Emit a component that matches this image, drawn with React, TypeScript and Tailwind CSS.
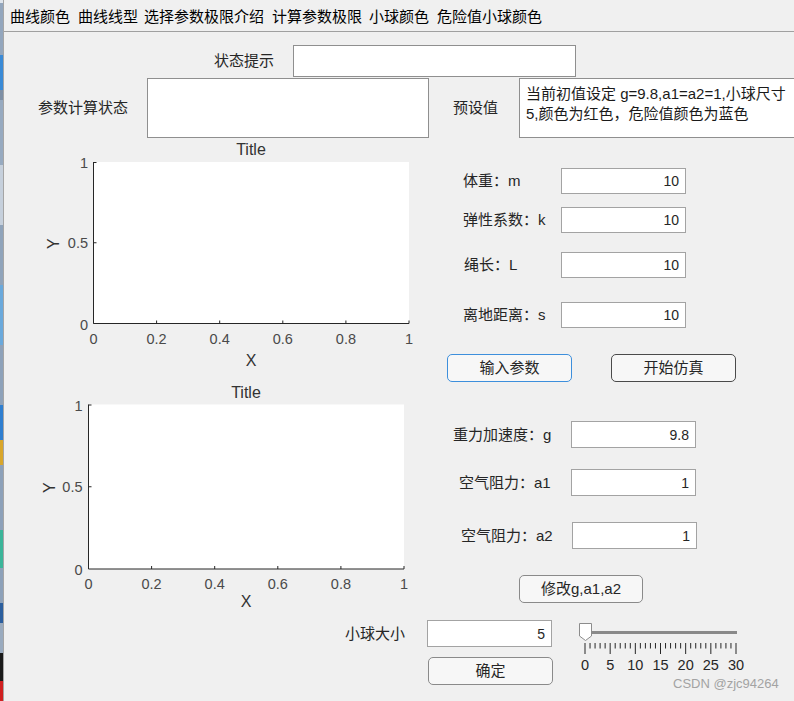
import React from "react";

const FONT = "font-['Liberation_Sans','Noto_Sans_CJK_SC',sans-serif]";

const STRIP = [
  "h-[3px] bg-[#dfe5ec]",
  "h-[52px] bg-[#93a6bd]",
  "h-[35px] bg-[#3a8ad6]",
  "h-[10px] bg-[#7d8fa5]",
  "h-[65px] bg-[#97aac0]",
  "h-[60px] bg-[#c6d0dc]",
  "h-[60px] bg-[#90a4bb]",
  "h-[60px] bg-[#6aa9dc]",
  "h-[60px] bg-[#8ea2ba]",
  "h-[35px] bg-[#2f7fd0]",
  "h-[25px] bg-[#d9a62a]",
  "h-[65px] bg-[#8da1b9]",
  "h-[38px] bg-[#3bb59a]",
  "h-[35px] bg-[#8da1b9]",
  "h-[20px] bg-[#2c5f9e]",
  "h-[30px] bg-[#9aabbf]",
  "h-[28px] bg-[#1a1a1a]",
  "h-[20px] bg-[#d02020]",
];

function Field({
  label,
  value,
  labelCls,
  boxCls,
}: {
  label: string;
  value: string;
  labelCls: string;
  boxCls: string;
}) {
  return (
    <div className="flex items-center">
      <span className={`${labelCls} shrink-0 whitespace-nowrap text-[15px] leading-[20px] text-[#262626]`}>
        {label}
      </span>
      <div
        className={`${boxCls} shrink-0 flex items-center justify-end border border-[#a3a3a3] bg-white pr-[6px] text-[14px] leading-[16px] text-[#262626]`}
      >
        {value}
      </div>
    </div>
  );
}

function Btn({ text, cls }: { text: string; cls: string }) {
  return (
    <div
      className={`${cls} shrink-0 flex items-center justify-center rounded-[5px] border bg-[#f7f7f7] text-[15px] leading-[20px] text-[#262626]`}
    >
      {text}
    </div>
  );
}

type ChartProps = {
  vb: string;
  w: number;
  h: number;
  L: number;
  R: number;
  T: number;
  B: number;
  yLabEnd: number;
  xLabY: number;
  xTitY: number;
  titleY: number;
  yTitX: number;
  cx: number;
};

function Chart(p: ChartProps) {
  const xs = [0, 1, 2, 3, 4, 5].map((i) => p.L + (i * (p.R - p.L)) / 5);
  const xl = ["0", "0.2", "0.4", "0.6", "0.8", "1"];
  const mid = (p.T + p.B) / 2;
  const font = "Liberation Sans, Arial, sans-serif";
  return (
    <svg width={p.w} height={p.h} viewBox={p.vb} className="block shrink-0">
      <rect x={p.L} y={p.T} width={p.R - p.L} height={p.B - p.T} fill="#ffffff" />
      <line x1={p.L} y1={p.T} x2={p.L} y2={p.B} stroke="#262626" strokeWidth={1} />
      <line x1={p.L} y1={p.B} x2={p.R} y2={p.B} stroke="#262626" strokeWidth={1.2} />
      {[p.T + 0.5, mid].map((y, i) => (
        <line key={i} x1={p.L} y1={y} x2={p.L + 3} y2={y} stroke="#262626" strokeWidth={1} />
      ))}
      {xs.map((x, i) => (
        <line key={i} x1={x} y1={p.B} x2={x} y2={p.B - 3} stroke="#262626" strokeWidth={1} />
      ))}
      <g fontFamily={font} fontSize={14.5} fill="#4a4a4a">
        <text x={p.yLabEnd} y={p.T + 1} textAnchor="end" dominantBaseline="central">1</text>
        <text x={p.yLabEnd} y={mid + 0.5} textAnchor="end" dominantBaseline="central">0.5</text>
        <text x={p.yLabEnd} y={p.B + 1} textAnchor="end" dominantBaseline="central">0</text>
        {xs.map((x, i) => (
          <text key={i} x={x} y={p.xLabY} textAnchor="middle" dominantBaseline="central">
            {xl[i]}
          </text>
        ))}
      </g>
      <g fontFamily={font} fontSize={16} fill="#333333">
        <text x={p.cx} y={p.titleY} textAnchor="middle" dominantBaseline="central">Title</text>
        <text x={p.cx} y={p.xTitY} textAnchor="middle" dominantBaseline="central">X</text>
        <text
          x={p.yTitX}
          y={mid + 1}
          textAnchor="middle"
          dominantBaseline="central"
          transform={`rotate(-90 ${p.yTitX} ${mid + 1})`}
        >
          Y
        </text>
      </g>
    </svg>
  );
}

function Slider() {
  const ticks = Array.from({ length: 31 }, (_, i) => i);
  const x0 = 584;
  const step = 151 / 30;
  return (
    <svg width={172} height={56} viewBox="576 620 172 56" className="block shrink-0">
      <rect x={589} y={631} width={147} height={3} fill="#8a8a8a" />
      <polygon
        points="578.5,623.5 590.5,623.5 590.5,636 584.5,640.5 578.5,636"
        fill="#ffffff"
        stroke="#8c8c8c"
        strokeWidth={1}
      />
      {ticks.map((i) => {
        const x = x0 + i * step;
        const major = i % 5 === 0;
        return (
          <line
            key={i}
            x1={x}
            y1={643}
            x2={x}
            y2={major ? 654 : 648.5}
            stroke="#262626"
            strokeWidth={1}
          />
        );
      })}
      <g fontFamily="Liberation Sans, Arial, sans-serif" fontSize={14.5} fill="#262626">
        {[0, 5, 10, 15, 20, 25, 30].map((v) => (
          <text key={v} x={x0 + v * step} y={664.5} textAnchor="middle" dominantBaseline="central">
            {v}
          </text>
        ))}
      </g>
    </svg>
  );
}

export default function App() {
  return (
    <div className={`${FONT} relative flex h-[701px] w-[794px] overflow-hidden bg-[#f0f0f0]`}>
      <div className="flex w-[3px] shrink-0 flex-col">
        {STRIP.map((c, i) => (
          <div key={i} className={`${c} shrink-0`} />
        ))}
      </div>
      <div className="flex w-[791px] shrink-0 flex-col overflow-hidden border-l border-[#a5a5a5]">
        {/* menu bar */}
        <div className="flex h-[32px] shrink-0 items-center border-b border-[#a0a0a0] bg-[#f0f0f0] pt-[2px] text-[15px] leading-[20px] text-black">
          <span className="ml-[6px] shrink-0">曲线颜色</span>
          <span className="ml-[8px] shrink-0">曲线线型</span>
          <span className="ml-[6px] shrink-0">选择参数极限介绍</span>
          <span className="ml-[8px] shrink-0">计算参数极限</span>
          <span className="ml-[7px] shrink-0">小球颜色</span>
          <span className="ml-[8px] shrink-0">危险值小球颜色</span>
        </div>

        {/* row A */}
        <div className="mt-[13px] flex shrink-0 items-center">
          <span className="ml-[210px] w-[60px] shrink-0 whitespace-nowrap text-[15px] leading-[20px] text-[#262626]">
            状态提示
          </span>
          <div className="ml-[19px] h-[32px] w-[283px] shrink-0 border border-[#8f8f8f] bg-white" />
        </div>

        {/* row B */}
        <div className="mt-[1px] flex shrink-0 items-center">
          <span className="ml-[34px] w-[90px] shrink-0 whitespace-nowrap text-[15px] leading-[20px] text-[#262626]">
            参数计算状态
          </span>
          <div className="ml-[19px] h-[60px] w-[282px] shrink-0 border border-[#8f8f8f] bg-white" />
          <span className="ml-[24px] w-[45px] shrink-0 whitespace-nowrap text-[15px] leading-[20px] text-[#262626]">
            预设值
          </span>
          <div className="ml-[21px] h-[60px] w-[330px] shrink-0 border border-[#8f8f8f] bg-white pl-[6px] pt-[5px] text-[15px] leading-[20px] text-[#1a1a1a]">
            <div className="whitespace-nowrap">当前初值设定 g=9.8,a1=a2=1,小球尺寸</div>
            <div className="whitespace-nowrap">5,颜色为红色，危险值颜色为蓝色</div>
          </div>
        </div>

        {/* main section */}
        <div className="flex h-[474px] shrink-0">
          <div className="flex w-[436px] shrink-0 flex-col">
            <Chart
              vb="4 138 436 234"
              w={436}
              h={234}
              L={93.5}
              R={409}
              T={162}
              B={323.5}
              yLabEnd={88}
              xLabY={339}
              xTitY={360}
              titleY={149.5}
              yTitX={53}
              cx={251}
            />
            <Chart
              vb="4 372 436 240"
              w={436}
              h={240}
              L={88.5}
              R={404}
              T={404.5}
              B={569}
              yLabEnd={82.5}
              xLabY={583.5}
              xTitY={601.7}
              titleY={392.7}
              yTitX={49}
              cx={246}
            />
          </div>
          <div className="flex flex-col">
            <div className="mt-[30px]">
              <Field label="体重：m" value="10" labelCls="ml-[23px] w-[98px]" boxCls="w-[125px] h-[26px]" />
            </div>
            <div className="mt-[13px]">
              <Field label="弹性系数：k" value="10" labelCls="ml-[23px] w-[98px]" boxCls="w-[125px] h-[26px]" />
            </div>
            <div className="mt-[19px]">
              <Field label="绳长：L" value="10" labelCls="ml-[24px] w-[97px]" boxCls="w-[125px] h-[26px]" />
            </div>
            <div className="mt-[24px]">
              <Field label="离地距离：s" value="10" labelCls="ml-[23px] w-[98px]" boxCls="w-[125px] h-[26px]" />
            </div>
            <div className="mt-[26px] flex">
              <Btn text="输入参数" cls="ml-[7px] w-[125px] h-[28px] border-[#3d8fdc]" />
              <Btn text="开始仿真" cls="ml-[39px] w-[125px] h-[28px] border-[#4a4a4a]" />
            </div>
            <div className="mt-[39px]">
              <Field label="重力加速度：g" value="9.8" labelCls="ml-[13px] w-[118px]" boxCls="w-[125px] h-[27px]" />
            </div>
            <div className="mt-[21px]">
              <Field label="空气阻力：a1" value="1" labelCls="ml-[19px] w-[112px]" boxCls="w-[125px] h-[27px]" />
            </div>
            <div className="mt-[26px]">
              <Field label="空气阻力：a2" value="1" labelCls="ml-[21px] w-[111px]" boxCls="w-[125px] h-[27px]" />
            </div>
            <div className="mt-[26px] flex">
              <Btn text="修改g,a1,a2" cls="ml-[79px] w-[124px] h-[28px] border-[#8a8a8a]" />
            </div>
          </div>
        </div>

        {/* bottom section */}
        <div className="flex shrink-0">
          <div className="ml-[341px] flex shrink-0 flex-col">
            <div className="mt-[8px] flex h-[27px] items-center">
              <span className="w-[60px] shrink-0 whitespace-nowrap text-[15px] leading-[20px] text-[#262626]">
                小球大小
              </span>
              <div className="ml-[22px] flex h-[27px] w-[125px] shrink-0 items-center justify-end border border-[#a3a3a3] bg-white pr-[6px] text-[14px] leading-[16px] text-[#262626]">
                5
              </div>
            </div>
            <div className="mt-[10px] flex">
              <Btn text="确定" cls="ml-[83px] w-[125px] h-[28px] border-[#8a8a8a]" />
            </div>
          </div>
          <div className="ml-[24px] mt-[8px]">
            <Slider />
          </div>
        </div>
      </div>

      <div className="absolute left-[673px] top-[676px] whitespace-nowrap font-['Liberation_Sans',sans-serif] text-[13px] leading-[16px] text-[#a3a3a3]">
        CSDN @zjc94264
      </div>
    </div>
  );
}
